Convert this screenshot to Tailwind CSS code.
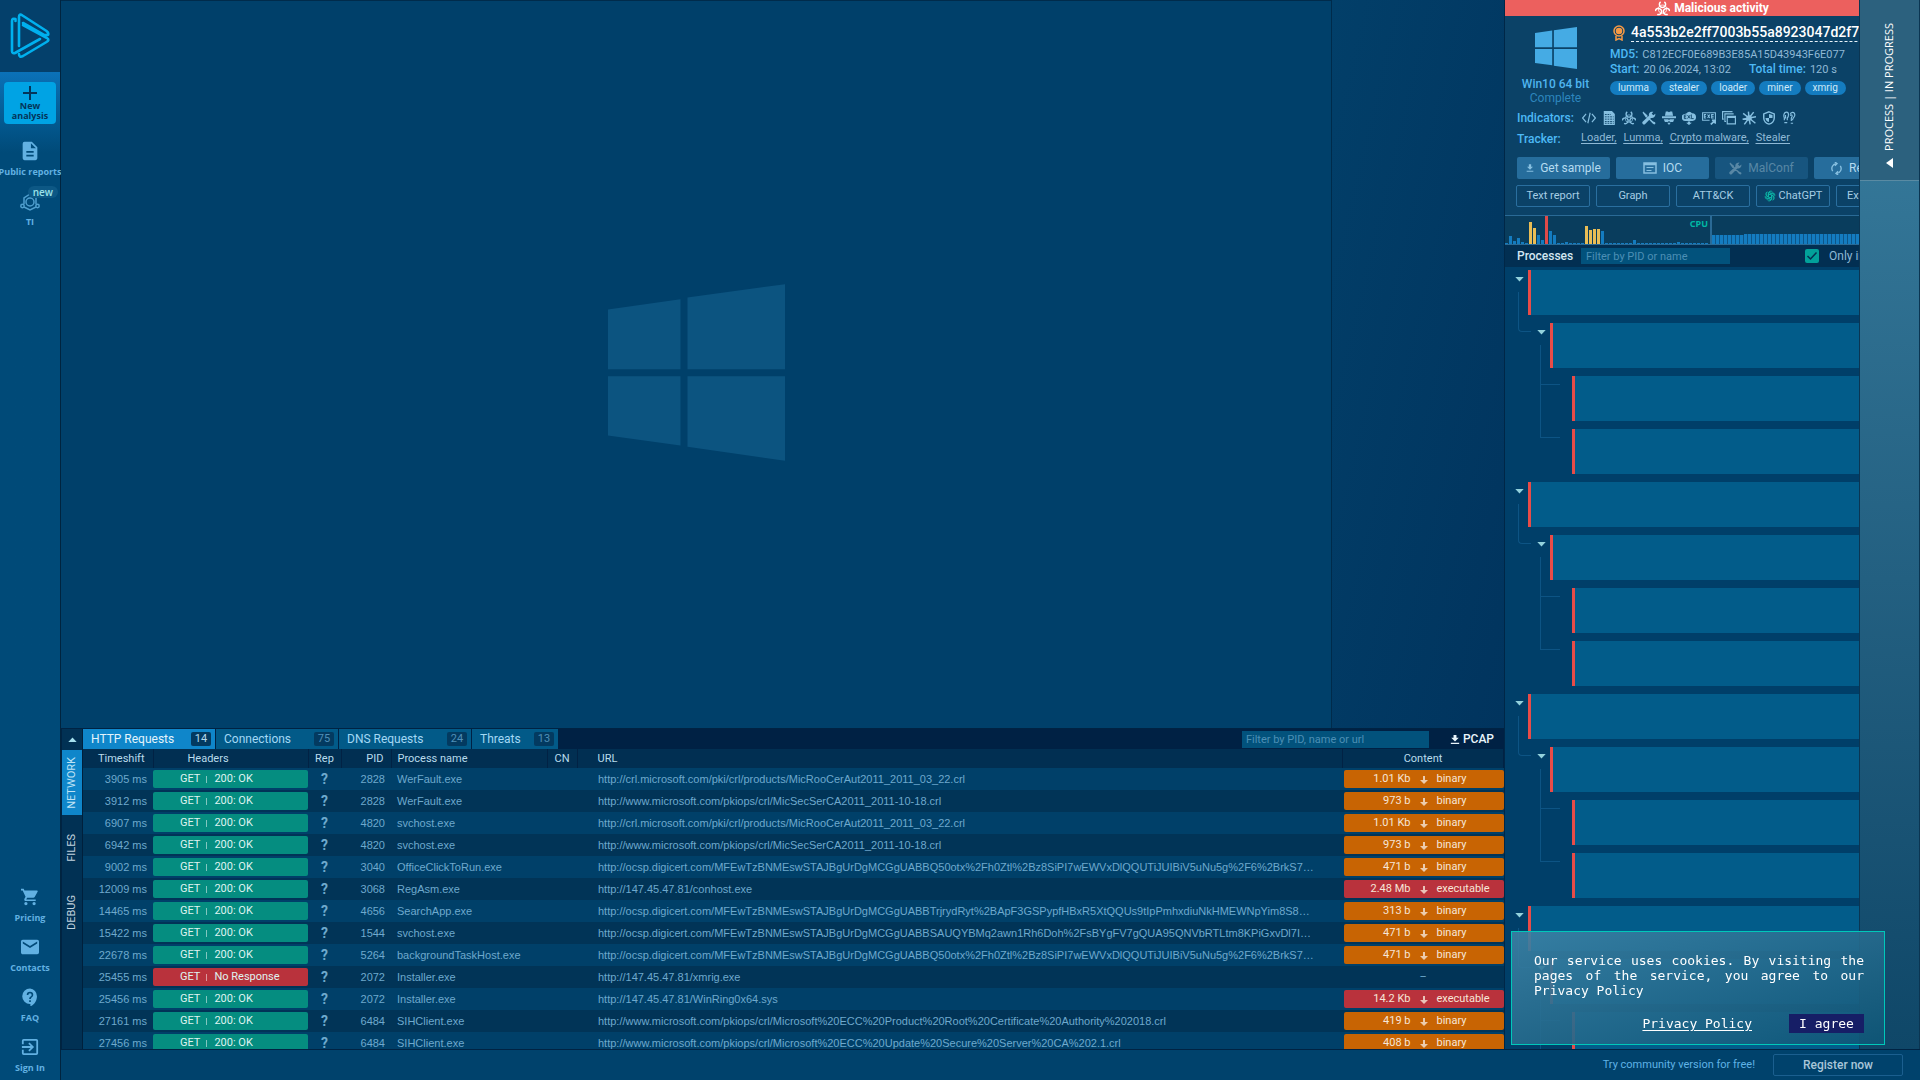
<!DOCTYPE html>
<html lang="en">
<head>
<meta charset="utf-8">
<title>Malware analysis</title>
<script src="https://cdn.jsdelivr.net/npm/@tailwindcss/browser@4"></script>
</head>
<body class="h-screen overflow-hidden bg-[#003f69] font-[Roboto,sans-serif] text-[11px] text-[#8fb9d6]">
<svg class="hidden" xmlns="http://www.w3.org/2000/svg">
  <symbol id="win" viewBox="23 41 530 529"><path fill="currentColor" d="M23 117 240 86V296H23zM261 81 553 41V296H261zM23 317H240V524L23 494zM261 317H553V570L261 528z"/></symbol>
  <symbol id="bio" viewBox="0 0 24 24"><g fill="none" stroke="currentColor"><path id="horn" stroke-width="2.400" d="M9 1.500a5 5 0 1 0 6 0"/><use href="#horn" transform="rotate(120 12 13)"/><use href="#horn" transform="rotate(240 12 13)"/><circle cx="12" cy="13" r="6.500" stroke-width="1.300"/></g></symbol>
  <symbol id="tools" viewBox="0 0 24 24"><path fill="currentColor" d="M2 1 9.500 7.500 9 9.600 19.200 18.200 22.500 19.200 23 22 21 23 18.300 21.500 8.600 11 6.500 11 1 3zM17 1.200a6 6 0 0 1 2.400.1L16.600 4.500 19.600 7.400 22.700 4.500a6 6 0 0 1-7.200 7.300L5.500 22.300a2.900 2.900 0 0 1-4-4.200L11.900 8.200A6 6 0 0 1 17 1.200z"/></symbol>
  <symbol id="dl" viewBox="0 0 24 24"><path fill="currentColor" d="M8.500 1h7v7H21l-9 9-9-9h5.500zM2 20h20v3H2z"/></symbol>
  <symbol id="down" viewBox="0 0 10 10"><path fill="currentColor" d="M4 1h2v4H9L5 9 1 5H4z"/></symbol>
  <symbol id="tri" viewBox="0 0 10 6"><path fill="currentColor" d="M0 0H10L5 5.500z"/></symbol>
</svg>
<div class="flex h-full">

  <nav class="flex w-[61px] shrink-0 flex-col border-r border-[#00243f] bg-[#004a78] text-center font-['Open_Sans',sans-serif] text-[9px] leading-[10px] font-bold text-[#62b1e2]">
    <a href="#" aria-label="Home" class="flex h-18 items-center justify-center bg-[#04406b]">
      <svg class="h-[46px] w-10" viewBox="0 0 40 46" fill="none" stroke="#00b0ee" stroke-width="2.600" stroke-linejoin="round" stroke-linecap="round"><path d="M5.500 8V6Q2 5 2 8V38Q2 41 5 40L30 26"/><path d="M9 33V4Q9 0 12.500 2.500L36.500 18Q39 20 38 22L34 22 13 10"/><path d="M9 41Q9 45 13 43L36.500 29Q40 27 37 25L13 12"/></svg>
    </a>
    <div class="flex flex-1 flex-col bg-linear-to-b from-[#0b72b8] to-[#004a78] to-8% pt-[10px]">
      <a href="#" class="mx-1 flex h-[42px] flex-col items-center rounded-sm bg-[#00a3e4] pt-[3px] text-[#04355a]">
        <svg class="h-4 w-4 shrink-0" viewBox="0 0 16 16" fill="none" stroke="currentColor" stroke-width="2"><path d="M8 1V15M1 8H15"/></svg>
        <span>New<br>analysis</span>
      </a>
      <a href="#" class="mt-4 flex flex-col items-center whitespace-nowrap">
        <svg class="mb-[5px] h-[22px] w-[22px]" viewBox="0 0 24 24" fill="currentColor"><path d="M14 2H6a2 2 0 0 0-2 2v16a2 2 0 0 0 2 2h12a2 2 0 0 0 2-2V8zM16 18H8v-2h8zm0-4H8v-2h8zm-3-5V3.500L18.500 9z"/></svg>
        <span>Public reports</span>
      </a>
      <a href="#" class="relative mt-4 flex flex-col items-center">
        <svg class="mb-[6px] h-[18px] w-5" viewBox="0 0 20 18" fill="none" stroke="#4f9fce" stroke-width="1.500"><circle cx="10" cy="9" r="4"/><path d="M4 11V5L10 1M16 11V5L13 3M4 14 10 17 16 14"/><circle cx="2.500" cy="13" r="1.700"/><circle cx="17.500" cy="13" r="1.700"/></svg>
        <span>TI</span>
        <span class="absolute -top-[7px] right-[2px] rounded-md bg-[#0d5885] px-[5px] py-px text-[10px] font-semibold text-[#9be3ea]">new</span>
      </a>
      <div class="mt-auto flex flex-col gap-[15px] pb-[7px]">
        <a href="#" class="flex flex-col items-center gap-[7px]"><svg class="h-[18px] w-[18px]" viewBox="1 2 22 20" fill="currentColor"><path d="M7 18a2 2 0 1 0 0 4 2 2 0 0 0 0-4zM1 2v2h2l3.600 7.600-1.400 2.400C4.500 15.400 5.500 17 7 17h12v-2H7.400l1.100-2h7.500c.7 0 1.400-.4 1.700-1L21.300 5.500A1 1 0 0 0 20.400 4H5.200L4.300 2zm16 16a2 2 0 1 0 0 4 2 2 0 0 0 0-4z"/></svg><span>Pricing</span></a>
        <a href="#" class="flex flex-col items-center gap-[7px]"><svg class="h-[18px] w-[18px]" viewBox="2 2 20 20" fill="currentColor"><path d="M20 4H4a2 2 0 0 0-2 2v12c0 1 1 2 2 2h16a2 2 0 0 0 2-2V6a2 2 0 0 0-2-2zm0 4-8 5-8-5V6l8 5 8-5z"/></svg><span>Contacts</span></a>
        <a href="#" class="flex flex-col items-center gap-[7px]"><svg class="h-[18px] w-[18px]" viewBox="1 1.500 21 22" fill="currentColor"><path d="M11.500 2a9.500 9.500 0 1 0 0 19H12v3c4.900-2.300 8-7 8-12.500A9.500 9.500 0 0 0 11.500 2zm1 16.500h-2v-2h2zm0-3.500h-2c0-3.300 3-3 3-5a2 2 0 1 0-4 0h-2a4 4 0 1 1 8 0c0 2.500-3 2.700-3 5z"/></svg><span>FAQ</span></a>
        <a href="#" class="flex flex-col items-center gap-[7px]"><svg class="h-[18px] w-[18px]" viewBox="2 2 20 20" fill="currentColor"><path d="m10.100 15.600 1.400 1.400 5-5-5-5-1.400 1.400L12.700 11H3v2h9.700zM19 3H5a2 2 0 0 0-2 2v4h2V5h14v14H5v-4H3v4a2 2 0 0 0 2 2h14a2 2 0 0 0 2-2V5a2 2 0 0 0-2-2z"/></svg><span>Sign In</span></a>
      </div>
    </div>
  </nav>

  <div class="flex min-w-0 flex-1 flex-col">
    <div class="flex min-h-0 flex-1">

      <main class="flex min-w-0 flex-1 flex-col border-r border-[#002747]">
        <section class="flex min-h-0 flex-1" aria-label="Screen">
          <div class="flex flex-1 items-center justify-center border-t border-r border-[#002b4b] bg-[#00406a] pt-4">
            <svg class="h-[177px] w-[177px] text-[#0c5480]"><use href="#win"/></svg>
          </div>
          <div class="w-[172px] shrink-0 bg-linear-to-br from-[#023f69] to-[#01345e]"></div>
        </section>

        <section class="flex h-[321px] shrink-0 border-t border-l border-[#002343] bg-[#013154]">
          <div class="flex w-[21px] shrink-0 flex-col border-r border-[#00203c]">
            <button aria-label="Collapse" class="flex h-[21px] items-center justify-center text-[#a5e0ee]"><svg class="h-[5px] w-[9px] rotate-180"><use href="#tri"/></svg></button>
            <button class="flex h-[65px] items-center justify-center bg-[#0f86ca] pl-px text-[#bfe3f5]"><span class="rotate-180 [writing-mode:vertical-rl]">NETWORK</span></button>
            <button class="flex h-[65px] items-center justify-center pl-px text-[#c2d3df]"><span class="rotate-180 [writing-mode:vertical-rl]">FILES</span></button>
            <button class="flex h-[65px] items-center justify-center pl-px text-[#c2d3df]"><span class="rotate-180 [writing-mode:vertical-rl]">DEBUG</span></button>
          </div>
          <div class="flex min-w-0 flex-1 flex-col">
            <div class="flex h-5 shrink-0 items-center bg-[#002144]">
              <div class="flex h-5 flex-1 gap-px text-xs text-[#a2d8f5]" id="tabs"></div>
              <input aria-label="Filter requests" placeholder="Filter by PID, name or url" class="mr-[21px] h-[17px] w-[187px] bg-[#02527c] px-1 text-[11px] placeholder:text-[#4c8fb5]">
              <button class="mr-2.5 flex items-center gap-[3px] text-xs font-medium text-[#e9f4fa]"><svg class="h-[11px] w-[10px]"><use href="#dl"/></svg>PCAP</button>
            </div>
            <div class="min-h-0 flex-1 overflow-hidden">
              <table class="w-full table-fixed border-collapse">
                <colgroup><col class="w-[70px]"><col class="w-[155px]"><col class="w-[33px]"><col class="w-[50px]"><col class="w-[156px]"><col class="w-[30px]"><col><col class="w-[161px]"></colgroup>
                <thead class="text-[#b9dcec]">
                  <tr class="h-[19px] bg-[#012f52] text-left *:border-r *:border-[#012244] *:pt-0.5 *:font-normal">
                    <th class="pr-2 text-right">Timeshift</th><th class="pl-[34px]">Headers</th><th class="text-center">Rep</th><th class="pr-[7px] text-right">PID</th><th class="pl-1.5">Process name</th><th class="text-center">CN</th><th class="pl-5">URL</th><th class="text-center">Content</th>
                  </tr>
                </thead>
                <tbody id="rows" class="font-['Liberation_Sans',sans-serif] text-[#6ea9cd]"></tbody>
              </table>
            </div>
          </div>
        </section>
      </main>

      <aside class="flex w-[354px] shrink-0 flex-col overflow-hidden bg-[#0b4267]">
        <div class="flex h-4 w-[414px] shrink-0 items-center justify-center gap-1 bg-[#ec605e] text-xs font-bold text-white"><svg class="h-[15px] w-[15px]"><use href="#bio"/></svg>Malicious activity</div>
        <div class="flex w-[460px] pt-[7px]">
          <div class="flex w-[101px] shrink-0 flex-col items-center text-xs leading-[14px]">
            <svg class="mt-1 mb-2 h-[42px] w-[42px] text-[#45abe4]"><use href="#win"/></svg>
            <span class="font-medium text-[#4fb5ef]">Win10 64 bit</span>
            <span class="text-[#2d86bd]">Complete</span>
          </div>
          <div class="pl-1 text-[11px]">
            <div class="flex items-start gap-1.5 pl-[3px] whitespace-nowrap">
              <svg class="mt-[2px] h-4 w-3" viewBox="0 0 12 16" fill="none" stroke="#f79a45" stroke-width="1.500"><circle cx="6" cy="6" r="5"/><circle cx="6" cy="6" r="2.500" fill="#f79a45"/><path d="M3 11V15L6 13.500 9 15V11"/></svg>
              <h1 class="border-b border-dashed border-[#e9f4fa] text-sm leading-[18px] font-medium text-white">4a553b2e2ff7003b55a8923047d2f757b1c0ab</h1>
            </div>
            <div class="mt-[5px] leading-[15px]"><b class="mr-1 text-xs leading-[14px] font-medium text-[#4db9f5]">MD5:</b>C812ECF0E689B3E85A15D43943F6E077</div>
            <div class="leading-[14px]"><b class="mr-1 text-xs leading-[14px] font-medium text-[#4db9f5]">Start:</b>20.06.2024, 13:02<b class="mr-1 ml-[18px] text-xs leading-[14px] font-medium text-[#4db9f5]">Total time:</b>120 s</div>
            <div class="mt-1 flex gap-1 text-[10px] leading-[14px] text-[#cfe9f8] *:rounded-full *:bg-[#147cc0] *:px-2">
              <a href="#">lumma</a><a href="#">stealer</a><a href="#">loader</a><a href="#">miner</a><a href="#">xmrig</a>
            </div>
          </div>
        </div>
        <div class="mt-[3px] flex h-5 w-[460px] shrink-0 items-center pl-3">
          <span class="w-[65px] text-xs font-medium text-[#4db9f5]">Indicators:</span>
          <div class="flex gap-1.5 text-[#86bfe0] *:h-[14px] *:w-[14px]">
            <svg viewBox="0 0 24 24" fill="none" stroke="currentColor" stroke-width="2"><path d="M7 5 1 12 7 19M17 5 23 12 17 19M14 3 10 21"/></svg>
            <svg viewBox="0 0 24 24"><path fill="currentColor" d="M3 0H17L22 5V24H3z"/><path stroke="#0b4267" stroke-width="1.500" stroke-dasharray="3 1.500" d="M5 6H15M5 10H20M5 14H20M5 18H20M5 21H20"/></svg>
            <svg><use href="#bio"/></svg>
            <svg><use href="#tools"/></svg>
            <svg viewBox="0 0 24 24" fill="currentColor"><path d="M6.500 1h3.500l2 1 2-1h3.500l1.500 7H5zM0 9H24V12.500H0zM3 14H10.500L12 15.500 13.500 14H21L19 19H14L12 17 10 19H5zM9 20 12 24 15 20z"/></svg>
            <svg viewBox="0 0 24 24"><path fill="currentColor" d="M8 4a5 5 0 0 1 9 0 6 6 0 0 1 1 13H6A6 6 0 0 1 5 5zM10 18h4v2h3l-5 4-5-4h3z"/><path stroke="#0b4267" fill="none" stroke-width="1.500" d="M7.500 7H4V13H7.500M4 10H7M9.500 7 14 13M14 7 9.500 13M16 6V13H20"/></svg>
            <svg viewBox="0 0 24 24" fill="none" stroke="currentColor" stroke-width="1.800"><path d="M13 16H1V3H23V15"/><path d="M7 6H4V12H7M4 9H7M9.500 6 13.500 12M13.500 6 9.500 12M20 6H16.500V12H20M16.500 9H20"/><path d="M15 23 22 17M17 16H23V22" stroke-width="3"/></svg>
            <svg viewBox="0 0 24 24" fill="none" stroke="currentColor" stroke-width="2"><path d="M18 1H1V14H3M20 5H5V18H7"/><path d="M9 9H23V22H9zM9 11H23"/></svg>
            <svg viewBox="0 0 24 24" fill="currentColor" stroke="currentColor" stroke-width="2.500"><circle cx="12" cy="12" r="3.500"/><path d="M12 12 11 1M12 12 2 4M12 12 1 14M12 12 4 23M12 12 14 23M12 12 23 21M12 12 24 10M12 12 20 2"/></svg>
            <svg viewBox="0 0 24 24" fill="none" stroke="currentColor" stroke-width="2.500"><path d="M12 1.500 21 5V12C21 17 17 21.500 12 22.500 7 21.500 3 17 3 12V5z"/><path fill="currentColor" stroke="none" d="M12 5V12H18V7zM6 12H12V19C8 18 6 15 6 12z"/></svg>
            <svg viewBox="0 0 24 24" fill="none" stroke="currentColor" stroke-width="2"><path d="M4 16V12C2 8 3 2 8 2 12 2 12 9 9 12V16M6 7V13M4 20H9M14 6C15 1 22 1 22 7 22 11 18 11 18 16M14 8C17 5 19 8 16 12V17M15 21H19"/></svg>
          </div>
        </div>
        <div class="flex h-5 w-[460px] shrink-0 items-center pt-px pl-3">
          <span class="w-[64px] text-xs font-medium text-[#4db9f5]">Tracker:</span>
          <div class="flex gap-[7px] underline underline-offset-2"><a href="#">Loader,</a><a href="#">Lumma,</a><a href="#">Crypto malware,</a><a href="#">Stealer</a></div>
        </div>
        <div class="mt-[9px] flex w-[460px] shrink-0 gap-1.5 pl-3 text-xs text-[#b5dbf0] *:flex *:h-[22px] *:w-[93px] *:shrink-0 *:items-center *:gap-1.5 *:rounded-[2px] *:bg-[#266d9c]">
          <button class="justify-center"><svg class="h-2.5 w-2 text-[#86bfe0]"><use href="#dl"/></svg>Get sample</button>
          <button class="justify-center"><svg class="h-3 w-[14px]" viewBox="0 0 14 12" fill="none" stroke="#86bfe0"><path stroke-width="1.500" d="M1 1H13V11H1zM1 2.500H13"/><path d="M3.500 5.500H10.500M3.500 8.500H8.500"/></svg>IOC</button>
          <button disabled class="justify-center opacity-45"><svg class="h-[13px] w-[13px]"><use href="#tools"/></svg>MalConf</button>
          <button class="pl-4"><svg class="h-[13px] w-[13px]" viewBox="0 0 24 24" fill="none" stroke="#86bfe0" stroke-width="2.500"><path d="M5 17A9 9 0 0 1 12 3M9 0 13 3 9 7M19 7A9 9 0 0 1 12 21M15 24 11 21 15 17"/></svg>Restart</button>
        </div>
        <div class="mt-1.5 flex w-[460px] shrink-0 gap-1.5 pl-[11px] text-[11px] text-[#a5cde4] *:flex *:h-[22px] *:w-[74px] *:shrink-0 *:items-center *:gap-[3px] *:rounded-[2px] *:border *:border-[#2a6f9f]">
          <button class="justify-center">Text report</button><button class="justify-center">Graph</button><button class="justify-center">ATT&amp;CK</button>
          <button class="justify-center"><svg class="h-3 w-3" viewBox="0 0 24 24" fill="none" stroke="#0cb5a5" stroke-width="1.800"><path id="petal" d="M9 13V6A4.500 4.500 0 0 1 17 4M9 10 15 6.500 20 9"/><use href="#petal" transform="rotate(60 12 12)"/><use href="#petal" transform="rotate(120 12 12)"/><use href="#petal" transform="rotate(180 12 12)"/><use href="#petal" transform="rotate(240 12 12)"/><use href="#petal" transform="rotate(300 12 12)"/></svg>ChatGPT</button>
          <button class="pl-2.5">Export</button>
        </div>
        <div class="mt-2 flex h-[30px] shrink-0 border-y border-[#2a6a96] bg-[#093d5d]">
          <div class="relative flex w-[207px] shrink-0 items-end gap-px border-r-2 border-[#2a6a96]" id="cpu"><span class="absolute top-[2px] right-[2px] font-['Noto_Sans',sans-serif] text-[9px] leading-3 font-bold text-[#00b8a5]">CPU</span></div>
          <div class="flex items-end overflow-hidden" id="ram"></div>
        </div>
        <div class="flex h-[22px] w-[460px] shrink-0 items-center bg-[#022f52] pl-3 text-xs">
          <h2 class="w-16 font-medium text-[#d3e6f1]">Processes</h2>
          <input aria-label="Filter processes" placeholder="Filter by PID or name" class="h-4 w-[149px] bg-[#02527c] px-[5px] text-[11px] placeholder:text-[#4c8fb5]">
          <label class="ml-[75px] flex items-center gap-2.5">
            <span class="grid h-[14px] w-[14px] *:col-start-1 *:row-start-1">
              <input type="checkbox" checked class="h-[14px] w-[14px] appearance-none rounded-[2px] bg-[#02a19a]">
              <svg class="pointer-events-none h-[14px] w-[14px]" viewBox="0 0 14 14" fill="none" stroke="#033052" stroke-width="1.500"><path d="M2.500 7 5.500 10 11.500 3.500"/></svg>
            </span>Only important</label>
        </div>
        <ul id="tree" class="min-h-0 flex-1 space-y-2 overflow-hidden bg-[#003f69] pt-[3px]"></ul>
      </aside>

      <div class="flex w-[61px] shrink-0 flex-col border-x border-[#0b3552] bg-linear-to-b from-[#3b80a1] to-[#0f4768]">
        <button class="flex h-[181px] shrink-0 flex-col items-center gap-[7px] border-b border-[#5a8ba3] bg-[#2c617e] pt-[23px] font-['Open_Sans',sans-serif] text-white"><span class="rotate-180 [writing-mode:vertical-rl]">PROCESS | IN PROGRESS</span><svg class="h-2.5 w-[7px]" viewBox="0 0 7 10"><path fill="#fff" d="M7 0V10L0 5z"/></svg></button>
      </div>
    </div>

    <footer class="flex h-[31px] shrink-0 items-center justify-end gap-[18px] border-t border-[#002343] bg-[#00426c] pr-[17px]">
      <a href="#" class="text-[#5fb2e6]">Try community version for free!</a>
      <button class="h-[22px] w-[130px] rounded-[2px] border border-[#1b5f8f] text-xs font-medium text-[#a9c6d9]">Register now</button>
    </footer>
  </div>
</div>

<div role="dialog" aria-label="Cookies" class="fixed right-[35px] bottom-[35px] flex h-[114px] w-[374px] flex-col justify-between border border-[#00c8ba] bg-linear-to-br from-[#3b82a5]/90 to-[#0e5677]/90 pt-[21px] pr-5 pb-[11px] pl-[22px] font-['DejaVu_Sans_Mono',monospace] text-[13px] leading-[15px] text-white">
  <p class="text-justify">Our service uses cookies. By visiting the pages of the service, you agree to our Privacy Policy</p>
  <div class="flex items-center justify-end gap-[37px]"><a href="#" class="underline underline-offset-2">Privacy Policy</a><button class="h-[19px] w-[75px] bg-[#161e66]">I agree</button></div>
</div>

<script>
const tabs = [['HTTP Requests',14,'w-[132px]'],['Connections',75,'w-[122px]'],['DNS Requests',24,'w-[132px]'],['Threats',13,'w-[86px]']];
document.getElementById('tabs').innerHTML = tabs.map(([name, n, w], i) =>
  `<button class="${w} flex items-center justify-between pl-2 pr-1 ${i ? 'bg-[#025a88]' : 'bg-[#0f86ca] text-[#e3f4fc]'}">${name}<span class="h-[14px] w-5 rounded-[2px] bg-[#033a60] text-center text-[11px] leading-[14px] ${i ? 'text-[#4f8fb8]' : 'text-[#b4d9ec]'}">${n}</span></button>`).join('');

const ocsp = 'http://ocsp.digicert.com/MFEwTzBNMEswSTAJBgUrDgMCGgUABBQ50otx%2Fh0Ztl%2Bz8SiPI7wEWVxDlQQUTiJUIBiV5uNu5g%2F6%2BrkS7…';
const rows = [
  [3905,2828,'WerFault.exe','http://crl.microsoft.com/pki/crl/products/MicRooCerAut2011_2011_03_22.crl','1.01 Kb'],
  [3912,2828,'WerFault.exe','http://www.microsoft.com/pkiops/crl/MicSecSerCA2011_2011-10-18.crl','973 b'],
  [6907,4820,'svchost.exe','http://crl.microsoft.com/pki/crl/products/MicRooCerAut2011_2011_03_22.crl','1.01 Kb'],
  [6942,4820,'svchost.exe','http://www.microsoft.com/pkiops/crl/MicSecSerCA2011_2011-10-18.crl','973 b'],
  [9002,3040,'OfficeClickToRun.exe',ocsp,'471 b'],
  [12009,3068,'RegAsm.exe','http://147.45.47.81/conhost.exe','2.48 Mb'],
  [14465,4656,'SearchApp.exe','http://ocsp.digicert.com/MFEwTzBNMEswSTAJBgUrDgMCGgUABBTrjrydRyt%2BApF3GSPypfHBxR5XtQQUs9tIpPmhxdiuNkHMEWNpYim8S8…','313 b'],
  [15422,1544,'svchost.exe','http://ocsp.digicert.com/MFEwTzBNMEswSTAJBgUrDgMCGgUABBSAUQYBMq2awn1Rh6Doh%2FsBYgFV7gQUA95QNVbRTLtm8KPiGxvDl7I…','471 b'],
  [22678,5264,'backgroundTaskHost.exe',ocsp,'471 b'],
  [25455,2072,'Installer.exe','http://147.45.47.81/xmrig.exe',''],
  [25456,2072,'Installer.exe','http://147.45.47.81/WinRing0x64.sys','14.2 Kb'],
  [27161,6484,'SIHClient.exe','http://www.microsoft.com/pkiops/crl/Microsoft%20ECC%20Product%20Root%20Certificate%20Authority%202018.crl','419 b'],
  [27456,6484,'SIHClient.exe','http://www.microsoft.com/pkiops/crl/Microsoft%20ECC%20Update%20Secure%20Server%20CA%202.1.crl','408 b']
];
document.getElementById('rows').innerHTML = rows.map(([t, pid, name, url, size], i) => {
  const exe = /147\.45/.test(url);
  const content = size
    ? `<div class="ml-px flex h-[18px] items-center rounded-[2px] pt-px text-[#f6e6d8] ${exe ? 'bg-[#b9323c]' : 'bg-[#c86403]'}"><span class="w-[67px] text-right">${size}</span><svg class="mx-2 h-[10px] w-[10px] opacity-80"><use href="#down"/></svg>${exe ? 'executable' : 'binary'}</div>`
    : '<div class="text-center">–</div>';
  return `<tr class="h-[22px] ${i % 2 ? 'bg-[#013457]' : 'bg-[#004069]'}">
    <td class="pr-1.5 text-right">${t} ms</td>
    <td class="font-[Roboto,sans-serif]"><div class="flex h-[18px] items-center rounded-[2px] pt-px pl-[27px] text-[#dff3f0] ${size ? 'bg-[#058d80]' : 'bg-[#b9323c]'}">GET<span class="mr-[7px] ml-1.5 h-[7px] w-px bg-white/50"></span>${size ? '200: OK' : 'No Response'}</div></td>
    <td class="text-center font-[Roboto,sans-serif] text-sm leading-4 font-bold">?</td>
    <td class="pr-1.5 text-right">${pid}</td>
    <td class="pl-1.5">${name}</td><td></td>
    <td class="truncate pl-[21px]">${url}</td>
    <td class="font-[Roboto,sans-serif]">${content}</td></tr>`;
}).join('');

const cpu = [1,8,3,6,2,1,22,16,9,4,28,13,9,1,1,2,1,1,1,1,18,14,15,15,13,1,1,1,1,1,1,1,4,1,1,1,1,1,1,1,1,1,1,2,1,1,1,1,1,1,1];
document.getElementById('cpu').innerHTML += cpu.map((h, i) => `<i class="w-[3px] shrink-0 ${i === 10 ? 'bg-[#e04a48]' : h > 13 ? 'bg-[#e9bd55]' : 'bg-[#147cc0]'}" style="height:${h}px"></i>`).join('');
document.getElementById('ram').innerHTML = Array.from({length: 40}, (_, i) => `<i class="w-1 shrink-0 border-r border-[#0d5588] bg-[#147cc0]" style="height:${i < 8 ? 9 : 10}px"></i>`).join('');

const pads = ['pl-[23px]', 'pl-[45px]', 'pl-[67px]'];
const arrows = ['left-[10px]', 'left-8'];
const links = ['left-[13px] h-10 w-[13px] -top-[31px] rounded-bl-sm', 'left-[35px] h-10 w-5 -top-[31px]', 'left-[35px] h-[53px] w-5 -top-11'];
document.getElementById('tree').innerHTML = Array.from({length: 16}, (_, i) => {
  const level = Math.min(i % 4, 2);
  return `<li class="relative ${pads[level]}">
    ${i % 4 ? `<i class="absolute border-b border-l border-[#0d5484] ${links[i % 4 - 1]}"></i>` : ''}
    ${level < 2 ? `<button aria-label="Toggle" class="absolute top-[7px] text-[#93d2dd] ${arrows[level]}"><svg class="block h-[5px] w-[9px]"><use href="#tri"/></svg></button>` : ''}
    <div class="h-[45px] border-l-3 border-[#e84c48] bg-[#025c8a]"></div></li>`;
}).join('');
</script>
</body>
</html>
